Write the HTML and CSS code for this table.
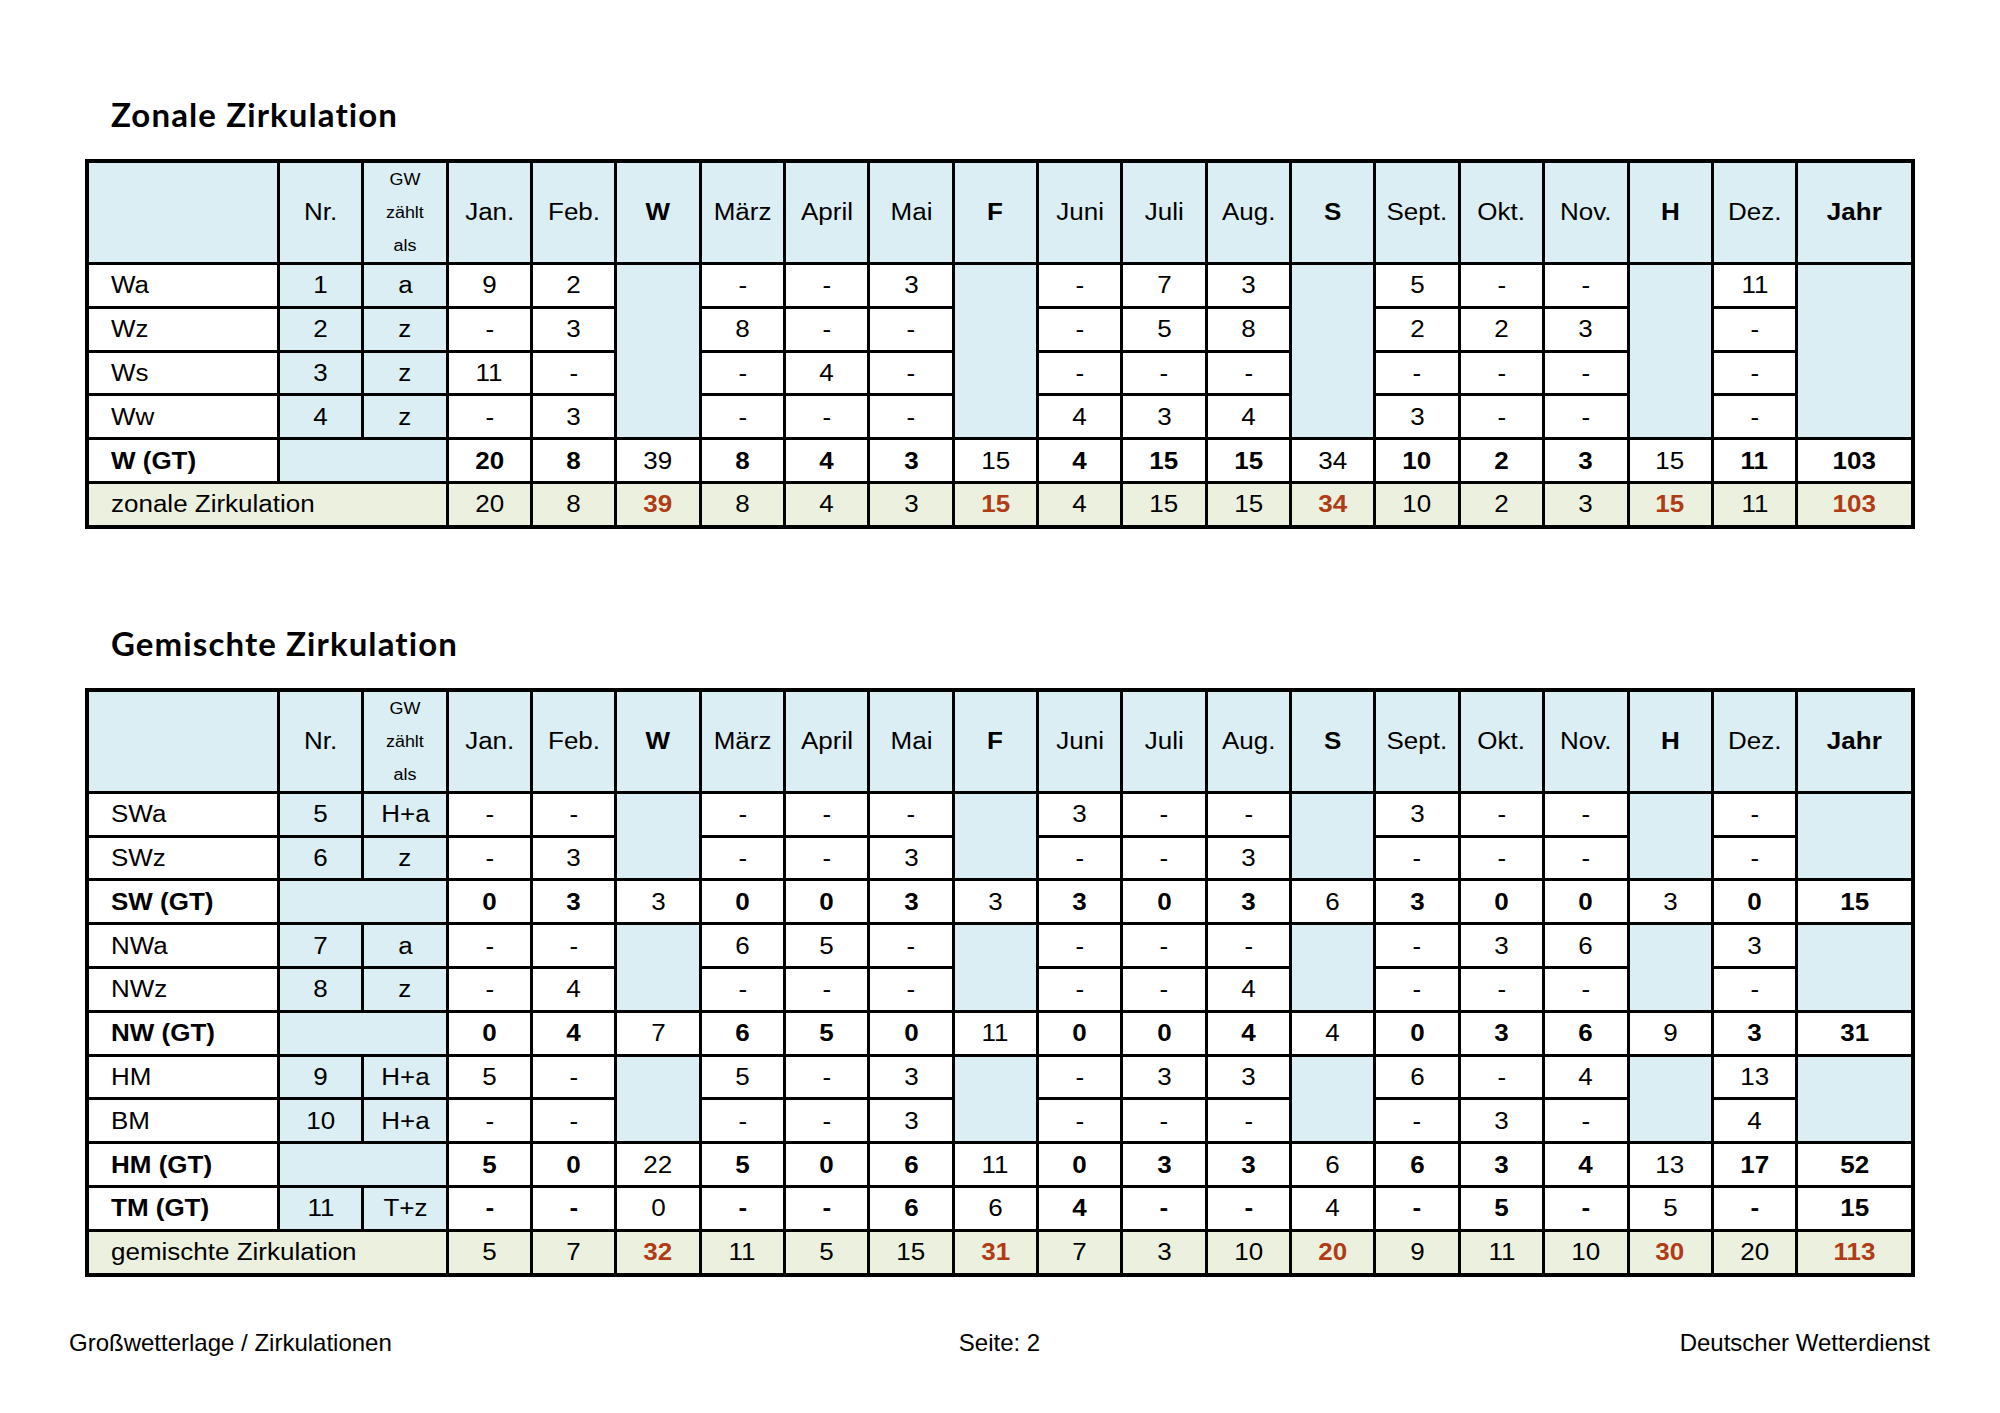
FILE: index.html
```html
<!DOCTYPE html>
<html lang="de">
<head>
<meta charset="utf-8">
<title>Großwetterlage / Zirkulationen</title>
<link rel="stylesheet" href="styles.css">
</head>
<body>
<div class="page">
  <h2 class="title">Zonale Zirkulation</h2>
  <table class="grid">
    <colgroup><col class="c-lab"><col span="18" class="c-m"><col class="c-y"></colgroup>
    <tr class="head">
      <td></td><td><span>Nr.</span></td><td class="gw"><span>GW<br>zählt<br>als</span></td>
      <td><span>Jan.</span></td><td><span>Feb.</span></td><td class="bold"><span>W</span></td>
      <td><span>März</span></td><td><span>April</span></td><td><span>Mai</span></td><td class="bold"><span>F</span></td>
      <td><span>Juni</span></td><td><span>Juli</span></td><td><span>Aug.</span></td><td class="bold"><span>S</span></td>
      <td><span>Sept.</span></td><td><span>Okt.</span></td><td><span>Nov.</span></td><td class="bold"><span>H</span></td>
      <td><span>Dez.</span></td><td class="bold"><span>Jahr</span></td>
    </tr>
    <tr class="r">
      <td class="lab"><span>Wa</span></td><td class="b"><span>1</span></td><td class="b"><span>a</span></td>
      <td><span>9</span></td><td><span>2</span></td><td class="b" rowspan="4"></td>
      <td><span>-</span></td><td><span>-</span></td><td><span>3</span></td><td class="b" rowspan="4"></td>
      <td><span>-</span></td><td><span>7</span></td><td><span>3</span></td><td class="b" rowspan="4"></td>
      <td><span>5</span></td><td><span>-</span></td><td><span>-</span></td><td class="b" rowspan="4"></td>
      <td><span>11</span></td><td class="b" rowspan="4"></td>
    </tr>
    <tr class="r">
      <td class="lab"><span>Wz</span></td><td class="b"><span>2</span></td><td class="b"><span>z</span></td>
      <td><span>-</span></td><td><span>3</span></td>
      <td><span>8</span></td><td><span>-</span></td><td><span>-</span></td>
      <td><span>-</span></td><td><span>5</span></td><td><span>8</span></td>
      <td><span>2</span></td><td><span>2</span></td><td><span>3</span></td>
      <td><span>-</span></td>
    </tr>
    <tr class="r">
      <td class="lab"><span>Ws</span></td><td class="b"><span>3</span></td><td class="b"><span>z</span></td>
      <td><span>11</span></td><td><span>-</span></td>
      <td><span>-</span></td><td><span>4</span></td><td><span>-</span></td>
      <td><span>-</span></td><td><span>-</span></td><td><span>-</span></td>
      <td><span>-</span></td><td><span>-</span></td><td><span>-</span></td>
      <td><span>-</span></td>
    </tr>
    <tr class="r">
      <td class="lab"><span>Ww</span></td><td class="b"><span>4</span></td><td class="b"><span>z</span></td>
      <td><span>-</span></td><td><span>3</span></td>
      <td><span>-</span></td><td><span>-</span></td><td><span>-</span></td>
      <td><span>4</span></td><td><span>3</span></td><td><span>4</span></td>
      <td><span>3</span></td><td><span>-</span></td><td><span>-</span></td>
      <td><span>-</span></td>
    </tr>
    <tr class="r gt">
      <td class="lab"><span>W (GT)</span></td><td class="b" colspan="2"></td>
      <td><span>20</span></td><td><span>8</span></td><td class="n"><span>39</span></td>
      <td><span>8</span></td><td><span>4</span></td><td><span>3</span></td><td class="n"><span>15</span></td>
      <td><span>4</span></td><td><span>15</span></td><td><span>15</span></td><td class="n"><span>34</span></td>
      <td><span>10</span></td><td><span>2</span></td><td><span>3</span></td><td class="n"><span>15</span></td>
      <td><span>11</span></td><td><span>103</span></td>
    </tr>
    <tr class="r sum">
      <td class="lab" colspan="3"><span>zonale Zirkulation</span></td>
      <td><span>20</span></td><td><span>8</span></td><td class="red"><span>39</span></td>
      <td><span>8</span></td><td><span>4</span></td><td><span>3</span></td><td class="red"><span>15</span></td>
      <td><span>4</span></td><td><span>15</span></td><td><span>15</span></td><td class="red"><span>34</span></td>
      <td><span>10</span></td><td><span>2</span></td><td><span>3</span></td><td class="red"><span>15</span></td>
      <td><span>11</span></td><td class="red"><span>103</span></td>
    </tr>
  </table>

  <h2 class="title second">Gemischte Zirkulation</h2>
  <table class="grid">
    <colgroup><col class="c-lab"><col span="18" class="c-m"><col class="c-y"></colgroup>
    <tr class="head">
      <td></td><td><span>Nr.</span></td><td class="gw"><span>GW<br>zählt<br>als</span></td>
      <td><span>Jan.</span></td><td><span>Feb.</span></td><td class="bold"><span>W</span></td>
      <td><span>März</span></td><td><span>April</span></td><td><span>Mai</span></td><td class="bold"><span>F</span></td>
      <td><span>Juni</span></td><td><span>Juli</span></td><td><span>Aug.</span></td><td class="bold"><span>S</span></td>
      <td><span>Sept.</span></td><td><span>Okt.</span></td><td><span>Nov.</span></td><td class="bold"><span>H</span></td>
      <td><span>Dez.</span></td><td class="bold"><span>Jahr</span></td>
    </tr>
    <tr class="r">
      <td class="lab"><span>SWa</span></td><td class="b"><span>5</span></td><td class="b"><span>H+a</span></td>
      <td><span>-</span></td><td><span>-</span></td><td class="b" rowspan="2"></td>
      <td><span>-</span></td><td><span>-</span></td><td><span>-</span></td><td class="b" rowspan="2"></td>
      <td><span>3</span></td><td><span>-</span></td><td><span>-</span></td><td class="b" rowspan="2"></td>
      <td><span>3</span></td><td><span>-</span></td><td><span>-</span></td><td class="b" rowspan="2"></td>
      <td><span>-</span></td><td class="b" rowspan="2"></td>
    </tr>
    <tr class="r">
      <td class="lab"><span>SWz</span></td><td class="b"><span>6</span></td><td class="b"><span>z</span></td>
      <td><span>-</span></td><td><span>3</span></td>
      <td><span>-</span></td><td><span>-</span></td><td><span>3</span></td>
      <td><span>-</span></td><td><span>-</span></td><td><span>3</span></td>
      <td><span>-</span></td><td><span>-</span></td><td><span>-</span></td>
      <td><span>-</span></td>
    </tr>
    <tr class="r gt">
      <td class="lab"><span>SW (GT)</span></td><td class="b" colspan="2"></td>
      <td><span>0</span></td><td><span>3</span></td><td class="n"><span>3</span></td>
      <td><span>0</span></td><td><span>0</span></td><td><span>3</span></td><td class="n"><span>3</span></td>
      <td><span>3</span></td><td><span>0</span></td><td><span>3</span></td><td class="n"><span>6</span></td>
      <td><span>3</span></td><td><span>0</span></td><td><span>0</span></td><td class="n"><span>3</span></td>
      <td><span>0</span></td><td><span>15</span></td>
    </tr>
    <tr class="r">
      <td class="lab"><span>NWa</span></td><td class="b"><span>7</span></td><td class="b"><span>a</span></td>
      <td><span>-</span></td><td><span>-</span></td><td class="b" rowspan="2"></td>
      <td><span>6</span></td><td><span>5</span></td><td><span>-</span></td><td class="b" rowspan="2"></td>
      <td><span>-</span></td><td><span>-</span></td><td><span>-</span></td><td class="b" rowspan="2"></td>
      <td><span>-</span></td><td><span>3</span></td><td><span>6</span></td><td class="b" rowspan="2"></td>
      <td><span>3</span></td><td class="b" rowspan="2"></td>
    </tr>
    <tr class="r">
      <td class="lab"><span>NWz</span></td><td class="b"><span>8</span></td><td class="b"><span>z</span></td>
      <td><span>-</span></td><td><span>4</span></td>
      <td><span>-</span></td><td><span>-</span></td><td><span>-</span></td>
      <td><span>-</span></td><td><span>-</span></td><td><span>4</span></td>
      <td><span>-</span></td><td><span>-</span></td><td><span>-</span></td>
      <td><span>-</span></td>
    </tr>
    <tr class="r gt">
      <td class="lab"><span>NW (GT)</span></td><td class="b" colspan="2"></td>
      <td><span>0</span></td><td><span>4</span></td><td class="n"><span>7</span></td>
      <td><span>6</span></td><td><span>5</span></td><td><span>0</span></td><td class="n"><span>11</span></td>
      <td><span>0</span></td><td><span>0</span></td><td><span>4</span></td><td class="n"><span>4</span></td>
      <td><span>0</span></td><td><span>3</span></td><td><span>6</span></td><td class="n"><span>9</span></td>
      <td><span>3</span></td><td><span>31</span></td>
    </tr>
    <tr class="r">
      <td class="lab"><span>HM</span></td><td class="b"><span>9</span></td><td class="b"><span>H+a</span></td>
      <td><span>5</span></td><td><span>-</span></td><td class="b" rowspan="2"></td>
      <td><span>5</span></td><td><span>-</span></td><td><span>3</span></td><td class="b" rowspan="2"></td>
      <td><span>-</span></td><td><span>3</span></td><td><span>3</span></td><td class="b" rowspan="2"></td>
      <td><span>6</span></td><td><span>-</span></td><td><span>4</span></td><td class="b" rowspan="2"></td>
      <td><span>13</span></td><td class="b" rowspan="2"></td>
    </tr>
    <tr class="r">
      <td class="lab"><span>BM</span></td><td class="b"><span>10</span></td><td class="b"><span>H+a</span></td>
      <td><span>-</span></td><td><span>-</span></td>
      <td><span>-</span></td><td><span>-</span></td><td><span>3</span></td>
      <td><span>-</span></td><td><span>-</span></td><td><span>-</span></td>
      <td><span>-</span></td><td><span>3</span></td><td><span>-</span></td>
      <td><span>4</span></td>
    </tr>
    <tr class="r gt">
      <td class="lab"><span>HM (GT)</span></td><td class="b" colspan="2"></td>
      <td><span>5</span></td><td><span>0</span></td><td class="n"><span>22</span></td>
      <td><span>5</span></td><td><span>0</span></td><td><span>6</span></td><td class="n"><span>11</span></td>
      <td><span>0</span></td><td><span>3</span></td><td><span>3</span></td><td class="n"><span>6</span></td>
      <td><span>6</span></td><td><span>3</span></td><td><span>4</span></td><td class="n"><span>13</span></td>
      <td><span>17</span></td><td><span>52</span></td>
    </tr>
    <tr class="r gt">
      <td class="lab"><span>TM (GT)</span></td><td class="b n"><span>11</span></td><td class="b n"><span>T+z</span></td>
      <td><span>-</span></td><td><span>-</span></td><td class="n"><span>0</span></td>
      <td><span>-</span></td><td><span>-</span></td><td><span>6</span></td><td class="n"><span>6</span></td>
      <td><span>4</span></td><td><span>-</span></td><td><span>-</span></td><td class="n"><span>4</span></td>
      <td><span>-</span></td><td><span>5</span></td><td><span>-</span></td><td class="n"><span>5</span></td>
      <td><span>-</span></td><td><span>15</span></td>
    </tr>
    <tr class="r sum">
      <td class="lab" colspan="3"><span>gemischte Zirkulation</span></td>
      <td><span>5</span></td><td><span>7</span></td><td class="red"><span>32</span></td>
      <td><span>11</span></td><td><span>5</span></td><td><span>15</span></td><td class="red"><span>31</span></td>
      <td><span>7</span></td><td><span>3</span></td><td><span>10</span></td><td class="red"><span>20</span></td>
      <td><span>9</span></td><td><span>11</span></td><td><span>10</span></td><td class="red"><span>30</span></td>
      <td><span>20</span></td><td class="red"><span>113</span></td>
    </tr>
  </table>

  <footer class="footer">
    <span class="f-left">Großwetterlage / Zirkulationen</span>
    <span class="f-mid">Seite: 2</span>
    <span class="f-right">Deutscher Wetterdienst</span>
  </footer>
</div>
</body>
</html>
```

FILE: styles.css
```css
html, body {
  margin: 0;
  padding: 0;
  background: #ffffff;
}

.page {
  width: 2000px;
  height: 1413px;
  padding-top: 95px;
  box-sizing: border-box;
  color: #000;
}

.title {
  margin: 0 0 26px 111px;
  font-family: Lato, "Open Sans", sans-serif;
  font-weight: 700;
  font-size: 33px;
  line-height: 38px;
  letter-spacing: 1.1px;
  color: #000;
}

.title.second {
  margin-top: 95px;
}

.grid {
  margin-left: 85px;
  width: 1830px;
  border-collapse: collapse;
  table-layout: fixed;
  border: 4px solid #000;
  font-family: "Liberation Sans", Arial, sans-serif;
  font-size: 23px;
  color: #000;
}

.c-lab { width: 191.5px; }
.c-m { width: 84.35px; }
.c-y { width: auto; }

.grid td {
  border: 3px solid #000;
  padding: 0;
  text-align: center;
  vertical-align: middle;
  background: #ffffff;
  white-space: nowrap;
}

.grid td span {
  display: inline-block;
  transform: scaleX(1.13);
  transform-origin: center center;
}

.grid tr.head td {
  background: #daeef3;
  height: 98px;
}

.grid td.gw {
  font-size: 16px;
  line-height: 33px;
}

.grid td.gw span {
  transform: scaleX(1.12);
}

.grid tr.r td {
  height: 40.8px;
  line-height: 26px;
}

.grid td.lab {
  text-align: left;
  padding-left: 22px;
}

.grid td.lab span {
  transform-origin: left center;
}

.grid td.b {
  background: #daeef3;
}

.grid .bold,
.grid tr.gt td {
  font-weight: 700;
}

.grid tr.gt td.n {
  font-weight: 400;
}

.grid tr.sum td {
  background: #ebf1de;
}

.grid tr.sum td.red {
  color: #b03c16;
  font-weight: 700;
}

.footer {
  display: grid;
  grid-template-columns: 1fr auto 1fr;
  margin-top: 53px;
  padding: 0 70px 0 69px;
  font-family: "Liberation Sans", Arial, sans-serif;
  font-size: 24px;
  line-height: 26px;
  color: #000;
}

.f-left { justify-self: start; }
.f-mid { justify-self: center; }
.f-right { justify-self: end; }
```
